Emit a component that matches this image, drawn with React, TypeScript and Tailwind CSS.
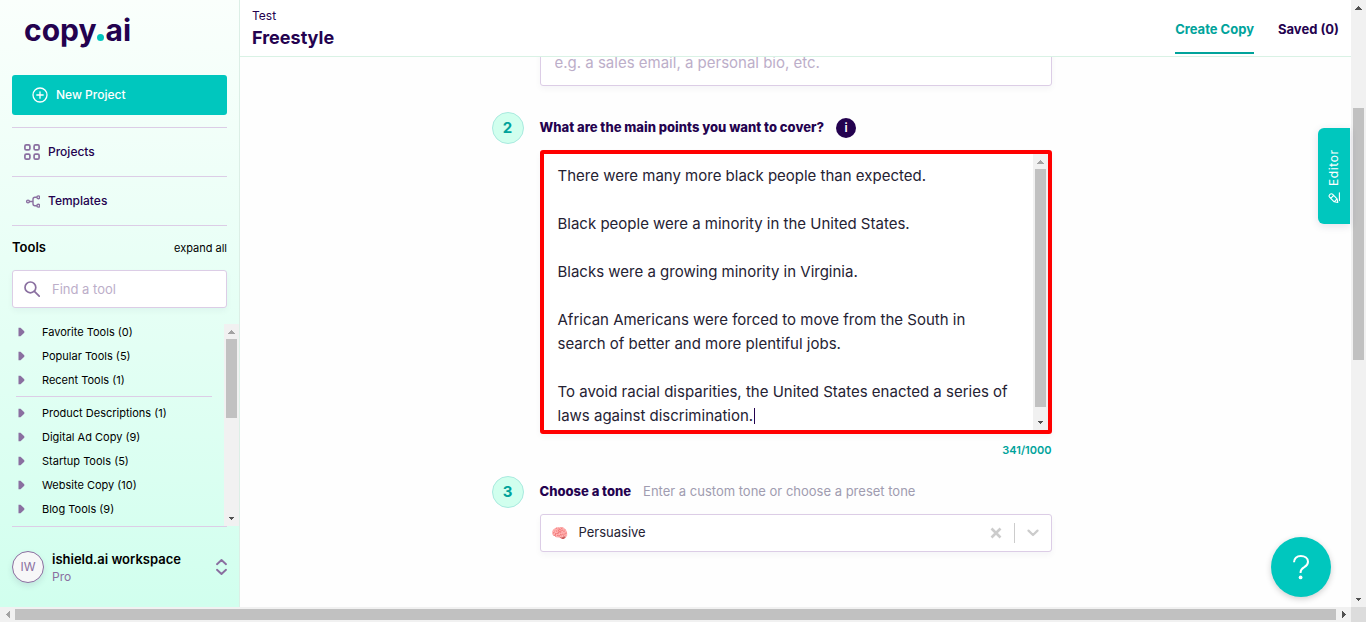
import type { ReactNode } from 'react';

const pinnedTools = ['Favorite Tools (0)', 'Popular Tools (5)', 'Recent Tools (1)'];
const categoryTools = [
  'Product Descriptions (1)',
  'Digital Ad Copy (9)',
  'Startup Tools (5)',
  'Website Copy (10)',
  'Blog Tools (9)',
];

const mainPoints = `There were many more black people than expected.

Black people were a minority in the United States.

Blacks were a growing minority in Virginia.

African Americans were forced to move from the South in search of better and more plentiful jobs.

To avoid racial disparities, the United States enacted a series of laws against discrimination.`;

type Direction = 'up' | 'down' | 'left' | 'right';

const arrowPaths: Record<Direction, string> = {
  up: 'M4 9.5 7.5 6 11 9.5z',
  down: 'M4 5.5 7.5 9 11 5.5z',
  left: 'M9.5 4 6 7.5 9.5 11z',
  right: 'M6 4 9.5 7.5 6 11z',
};

function ScrollArrow({ direction, muted = false }: { direction: Direction; muted?: boolean }) {
  return (
    <svg viewBox="0 0 15 15" className="size-[15px] shrink-0" shapeRendering="crispEdges" aria-hidden="true">
      <path d={arrowPaths[direction]} fill={muted ? '#a3a3a3' : '#505050'} />
    </svg>
  );
}

function VerticalScrollbar({ thumb, atTop = false }: { thumb: ReactNode; atTop?: boolean }) {
  return (
    <div className="flex w-[15px] shrink-0 flex-col bg-[#f1f1f1]" aria-hidden="true">
      <ScrollArrow direction="up" muted={atTop} />
      <div className="flex min-h-0 grow flex-col px-0.5">{thumb}</div>
      <ScrollArrow direction="down" />
    </div>
  );
}

function ToolItem({ label }: { label: string }) {
  return (
    <li>
      <button type="button" className="flex h-6 w-full items-center gap-[17px] pl-[6px] text-left text-[11px] text-black">
        <svg viewBox="0 0 7 10" className="h-[10px] w-[7px]" aria-hidden="true">
          <path d="M.5.8h2L6.3 4.2v1.6L2.5 9.2h-2z" fill="#8a6fa0" />
        </svg>
        {label}
      </button>
    </li>
  );
}

function Sidebar() {
  return (
    <aside className="flex w-60 shrink-0 flex-col border-r border-[#dcefe6] bg-linear-to-b from-[#fafffc] to-[#d1ffee]">
      <a href="#home" aria-label="copy.ai" className="flex h-[75px] items-center pb-4 pl-6 text-[30px] leading-10 font-bold text-[#24024f]">
        copy
        <svg viewBox="0 0 8 8" className="mx-px mt-4 size-[7px]" aria-hidden="true">
          <circle cx="4" cy="4" r="4" fill="#00c4bd" />
        </svg>
        ai
      </a>
      <div className="px-3">
        <button type="button" className="flex h-10 w-full items-center gap-2 rounded-[3px] bg-[#00c7be] pl-5 text-xs font-medium text-white">
          <svg viewBox="0 0 16 16" className="size-4" fill="none" stroke="currentColor" strokeWidth="1.3" strokeLinecap="round" aria-hidden="true">
            <circle cx="8" cy="8" r="7" />
            <path d="M8 4.8v6.4M4.8 8h6.4" />
          </svg>
          New Project
        </button>
        <nav className="mt-3">
          <a href="#projects" className="flex h-[49px] items-center gap-2 border-t border-[#dccde6] pl-3 text-xs font-medium text-[#24024f]">
            <svg viewBox="0 0 16 16" className="size-4" fill="none" stroke="#8a6fa0" strokeWidth="1.7" aria-hidden="true">
              <rect x=".9" y=".9" width="5" height="5" rx="1.4" />
              <rect x="10.1" y=".9" width="5" height="5" rx="1.4" />
              <rect x=".9" y="10.1" width="5" height="5" rx="1.4" />
              <rect x="10.1" y="10.1" width="5" height="5" rx="1.4" />
            </svg>
            Projects
          </a>
          <a href="#templates" className="flex h-[50px] items-center gap-2 border-y border-[#dccde6] pl-3 text-xs font-medium text-[#24024f]">
            <svg viewBox="0 0 16 16" className="size-4" fill="none" stroke="#8a6fa0" strokeWidth="1.4" aria-hidden="true">
              <circle cx="4" cy="8.5" r="1.4" />
              <circle cx="14.3" cy="4.3" r="1.4" />
              <circle cx="14.3" cy="12.7" r="1.4" />
              <path d="M5.4 8.5h3M12.9 4.3H11a2 2 0 0 0-2 2v4.4a2 2 0 0 0 2 2h1.9" />
            </svg>
            Templates
          </a>
        </nav>
        <div className="flex h-11 items-center justify-between">
          <h2 className="text-[13px] font-semibold text-black">Tools</h2>
          <button type="button" className="text-[11px] text-black">expand all</button>
        </div>
        <label className="flex h-[38px] items-center gap-3 rounded-[3px] border border-[#dccde6] bg-white pl-[11px] shadow-[0_3px_6px_#24024f0a]">
          <svg viewBox="0 0 16 16" className="size-4 shrink-0" fill="none" stroke="#8a6fa0" strokeWidth="1.7" strokeLinecap="round" aria-hidden="true">
            <circle cx="6.4" cy="6.4" r="5.4" />
            <path d="M10.4 10.4 15.2 15.2" />
          </svg>
          <input type="text" aria-label="Find a tool" placeholder="Find a tool" className="h-full min-w-0 grow text-[13px] outline-none placeholder:text-[#bcaec9]" />
        </label>
      </div>

      <div className="mt-3 flex min-h-0 grow">
        <div className="min-w-0 grow overflow-hidden px-3">
          <ul>
            {pinnedTools.map((label) => <ToolItem key={label} label={label} />)}
          </ul>
          <hr className="my-1 ml-1 border-[#dccde6]" />
          <ul>
            {categoryTools.map((label) => <ToolItem key={label} label={label} />)}
          </ul>
        </div>
        <div className="flex pt-1">
          <VerticalScrollbar atTop thumb={<div className="h-[46%] bg-[#c1c1c1]" />} />
        </div>
      </div>

      <button type="button" className="mx-3 flex h-[81px] shrink-0 items-center gap-2 border-t border-[#dccde6] text-left">
        <span className="flex size-8 items-center justify-center rounded-full border border-[#8a6fa0] bg-[#f7f7f8] text-xs text-[#8a6fa0] shadow-[0_3px_6px_#24024f1a]">IW</span>
        <span className="grow">
          <span className="block text-[13px] leading-5 font-semibold text-black">ishield.ai workspace</span>
          <span className="block text-xs leading-4 text-[#8a6fa0]">Pro</span>
        </span>
        <svg viewBox="0 0 11 16" className="h-4 w-[11px]" fill="none" stroke="#8a6fa0" strokeWidth="1.9" strokeLinecap="round" strokeLinejoin="round" aria-hidden="true">
          <path d="M1 5.2 5.5 1 10 5.2M1 10.8 5.5 15 10 10.8" />
        </svg>
      </button>
    </aside>
  );
}

function StepNumber({ value }: { value: number }) {
  return (
    <span className="mr-4 flex size-8 items-center justify-center justify-self-end rounded-full border border-[#a9eadf] bg-[#d1ffee] text-[15px] font-bold text-[#00a39b]">
      {value}
    </span>
  );
}

function CopyForm() {
  return (
    <form className="-mt-[17px] grid grid-cols-[1fr_minmax(0,512px)_1fr]">
      <input
        aria-label="What are you looking to create?"
        placeholder="e.g. a sales email, a personal bio, etc."
        className="col-start-2 h-[46px] rounded-[3px] border border-[#dccde6] bg-white px-[14px] pb-0.5 text-[15px] shadow-[0_3px_6px_#24024f0a] outline-none placeholder:text-[#bcaec9]"
      />

      <div className="col-span-3 mt-[26px] grid grid-cols-subgrid items-center">
        <StepNumber value={2} />
        <div className="flex items-center gap-3">
          <label htmlFor="points" className="text-[13px] font-extrabold text-[#24024f]">What are the main points you want to cover?</label>
          <button type="button" aria-label="More information" className="size-5 rounded-full bg-[#24024f] text-xs leading-5 font-semibold text-white">i</button>
        </div>
      </div>
      <div className="relative col-start-2 mt-1.5 flex h-[284px] rounded-[3px] border-4 border-[#ff0000] bg-white shadow-[0_3px_6px_#24024f0a]">
        <textarea
          id="points"
          defaultValue={mainPoints}
          className="min-w-0 grow resize-none overflow-hidden pt-[10px] pr-5 pl-[14px] text-[15px] leading-6 text-[#252233] outline-none"
        />
        <VerticalScrollbar thumb={<div className="mb-2 grow bg-[#c1c1c1]" />} atTop />
        <span className="absolute bottom-1.5 left-[210px] h-4 w-px bg-[#24024f]" aria-hidden="true" />
      </div>
      <p className="col-start-2 mt-2 mb-[18px] text-right text-[11px] leading-4 font-semibold text-[#00a39b]">341/1000</p>

      <div className="col-span-3 grid grid-cols-subgrid items-center">
        <StepNumber value={3} />
        <div className="flex items-center gap-3">
          <h3 className="text-[13px] font-extrabold text-[#24024f]">Choose a tone</h3>
          <p className="text-[13px] text-[#a09cb0]">Enter a custom tone or choose a preset tone</p>
        </div>
      </div>
      <div className="col-start-2 mt-1.5 flex h-[38px] items-center rounded-[3px] border border-[#dccde6] bg-white pl-[10px] shadow-[0_3px_6px_#24024f0a]">
        <span className="w-7 text-sm leading-5" aria-hidden="true">🧠</span>
        <select aria-label="Tone" className="min-w-0 grow appearance-none bg-transparent text-[13px] text-[#252233] outline-none">
          <option>Persuasive</option>
        </select>
        <button type="button" aria-label="Clear tone" className="px-2">
          <svg viewBox="0 0 12 12" className="size-3" stroke="#cccccc" strokeWidth="2.6" aria-hidden="true">
            <path d="M1.5 1.5 10.5 10.5M10.5 1.5 1.5 10.5" />
          </svg>
        </button>
        <span className="ml-1 h-5 w-px bg-[#cccccc]" />
        <button type="button" aria-label="Open tone list" className="px-3">
          <svg viewBox="0 0 12 8" className="h-2 w-3" fill="none" stroke="#cccccc" strokeWidth="2.2" strokeLinecap="round" strokeLinejoin="round" aria-hidden="true">
            <path d="M1.5 1.6 6 6 10.5 1.6" />
          </svg>
        </button>
      </div>
    </form>
  );
}

export default function App() {
  return (
    <div className="flex h-screen flex-col overflow-hidden bg-white font-['Inter','Liberation_Sans',sans-serif]">
      <div className="flex min-h-0 grow">
        <Sidebar />
        <div className="relative flex min-w-0 grow flex-col">
          <header className="z-10 flex h-[57px] shrink-0 justify-between border-b border-[#d9f2e5] bg-white px-3">
            <div className="pt-2">
              <p className="text-xs leading-4 text-[#24024f]">Test</p>
              <h1 className="text-lg leading-7 font-bold text-[#24024f]">Freestyle</h1>
            </div>
            <nav className="flex h-[54px] gap-6 text-[13px] font-bold text-[#24024f]">
              <a href="#create" className="flex items-center border-b-2 border-[#00a39b] pt-2 text-[#00a39b]">Create Copy</a>
              <a href="#saved" className="flex items-center border-b-2 border-transparent pt-2">Saved (0)</a>
            </nav>
          </header>
          <main className="min-h-0 grow overflow-hidden bg-[#fefefe]">
            <CopyForm />
          </main>
          <button type="button" className="absolute top-32 right-px flex h-24 w-8 rotate-180 items-center gap-1.5 rounded-r-md bg-[#00c7be] pt-5 text-xs tracking-wider text-white shadow-[0_-2px_8px_#24024f1f] [writing-mode:vertical-rl]">
            <svg viewBox="0 0 14 14" className="size-3 rotate-90" fill="none" stroke="currentColor" strokeWidth="1.3" strokeLinecap="round" strokeLinejoin="round" aria-hidden="true">
              <path d="M2.6 7.2 8 1.8a1.8 1.8 0 0 1 2.6 0l.8.8a1.8 1.8 0 0 1 0 2.6L6 10.6l-4.2.9zM2.6 7.2 6 10.6M6.6 3.2 10 6.6M4 13.3h9" />
            </svg>
            Editor
          </button>
          <button type="button" aria-label="Help" className="absolute right-5 bottom-2.5 flex size-[60px] items-center justify-center rounded-full bg-[#00c7be] text-white shadow-[0_2px_6px_#00000030]">
            <svg viewBox="0 0 18 26" className="h-[26px] w-[18px]" fill="none" stroke="currentColor" strokeWidth="2" aria-hidden="true">
              <path d="M2 8.2C2 4.4 4.7 2 8.8 2S16 4.3 16 7.7c0 2.6-1.4 4-3.7 5.4C9.7 14.6 8.6 15.6 8.6 18v1" />
              <circle cx="8.6" cy="23.4" r="1.9" fill="currentColor" stroke="none" />
            </svg>
          </button>
        </div>
        <VerticalScrollbar
          thumb={
            <>
              <div className="basis-[93px]" />
              <div className="h-[252px] bg-[#c1c1c1]" />
            </>
          }
        />
      </div>
      <div className="flex h-[15px] shrink-0 bg-[#f1f1f1]" aria-hidden="true">
        <ScrollArrow direction="left" muted />
        <div className="my-0.5 grow bg-[#c1c1c1]" />
        <ScrollArrow direction="right" />
        <div className="w-[15px] bg-[#dcdcdc]" />
      </div>
    </div>
  );
}
